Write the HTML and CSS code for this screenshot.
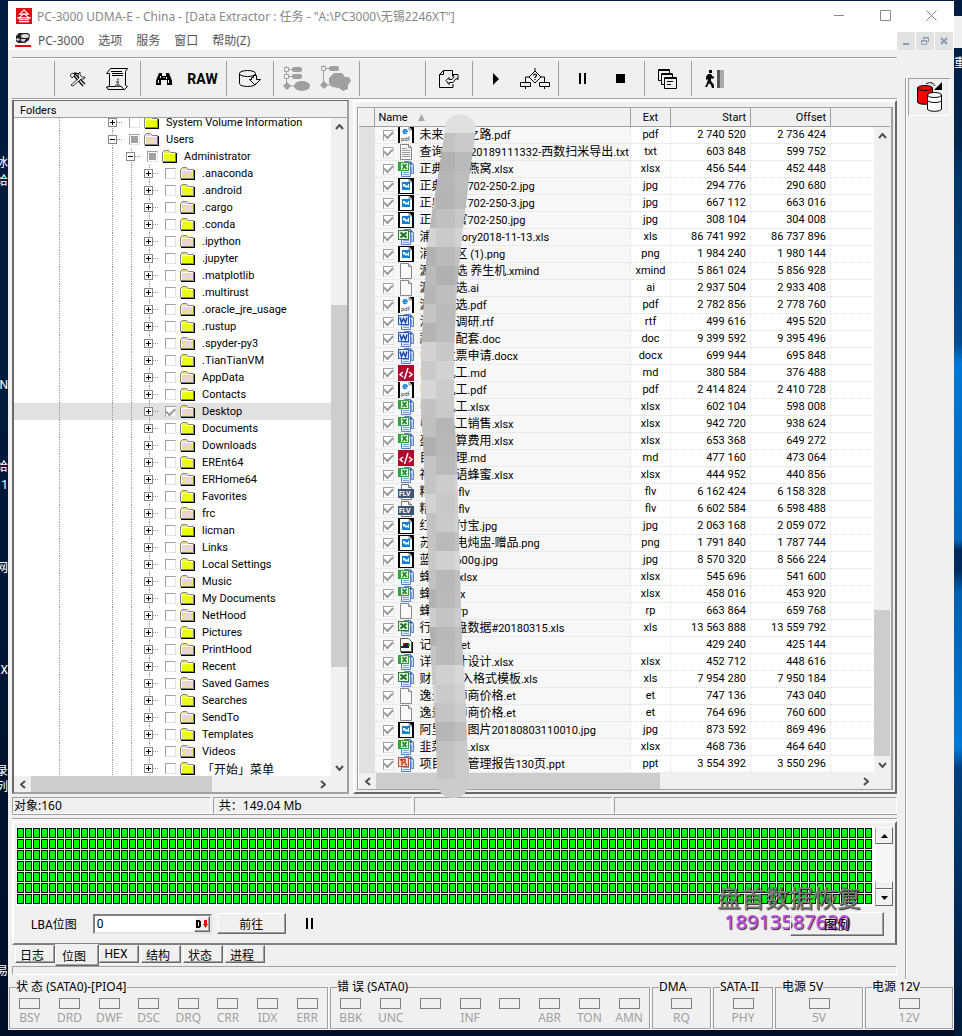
FILE: index.html
```html
<!DOCTYPE html>
<html lang="zh-CN">
<head>
    <meta charset="UTF-8">
    <meta name="viewport" content="width=device-width, initial-scale=1.0">
    <title>PC-3000 UDMA-E</title>
    <link rel="stylesheet" href="styles.css">
</head>
<body>
    <!-- icon library -->
    <svg class="defs" aria-hidden="true">
        <defs>
            <pattern id="dither" width="2" height="2" patternUnits="userSpaceOnUse">
                <rect width="2" height="2" fill="#ffff00"/>
                <rect x="1" width="1" height="1" fill="#d8d8d0"/><rect y="1" width="1" height="1" fill="#d8d8d0"/>
            </pattern>
            <pattern id="sectors" width="8" height="11" patternUnits="userSpaceOnUse">
                <rect x="1" y="1" width="7" height="10" fill="#000"/>
                <rect x="2" y="2" width="5" height="8" fill="#00ff00"/>
            </pattern>
            <symbol id="folder" viewBox="0 0 15 13">
                <path d="M1 12.5h14M14.5 3v10" stroke="#000"/>
                <path d="M.5 11.5v-9l2-2h4l2 2h5v9z" fill="url(#dither)" stroke="#808080"/>
                <path d="M1.5 11V3.5H13" stroke="#fff" fill="none"/>
            </symbol>
            <symbol id="f-pdf" viewBox="0 0 16 16">
                <rect width="16" height="16" fill="#000"/><path d="M2 0h9l3 3v13H2z" fill="#fff"/><path d="M11 0v3h3" fill="#ddd" stroke="#888"/>
                <path d="M5.500 4.500h3.700A2 2 0 1 0 8.600 6" fill="none" stroke="#1683d8" stroke-width="1.4"/>
                <text x="3" y="14" font-family="Roboto" font-size="6" fill="#333">pdf</text>
            </symbol>
            <symbol id="f-txt" viewBox="0 0 16 16">
                <path d="M2.5.5h8l3 3v12h-11z" fill="#fafafa" stroke="#888"/><path d="M10.5.5v3h3" fill="none" stroke="#888"/>
                <path d="M4 4.5h5M4 6.5h8M4 8.5h8M4 10.5h8M4 12.5h8" stroke="#999"/>
            </symbol>
            <symbol id="f-blank" viewBox="0 0 16 16">
                <path d="M2.5.5h8l3 3v12h-11z" fill="#fafafa" stroke="#888"/><path d="M10.5.5v3h3" fill="#ddd" stroke="#888"/>
            </symbol>
            <symbol id="f-jpg" viewBox="0 0 16 16">
                <rect width="16" height="16" fill="#000"/><path d="M2 1h9l3 3v11H2z" fill="#fff"/><path d="M11 1v3h3" fill="#ccc" stroke="#888"/>
                <rect x="4" y="4" width="8" height="8" fill="#0f7fd8"/><path d="M5 6h2l1 2 1-1 1 1V6h1v4l-2-1-1 1-2-2-1 1z" fill="#fff"/>
            </symbol>
            <symbol id="sheets" viewBox="0 0 16 16">
                <path d="M6.500.5h6l3 3v9h-9z" fill="#cfdcf4" stroke="#5b7fc4"/><path d="M3.500 2.500h9v13h-9z" fill="#e4ecfa" stroke="#5b7fc4"/>
                <path d="M5 11.500h6M5 13.500h6M13.500 6v7" stroke="#7fa0dc"/><path d="M12 .5l3 3h-3z" fill="#345ca8"/>
            </symbol>
            <symbol id="f-xlsx" viewBox="0 0 16 16">
                <use href="#sheets"/><rect x="0" y="1" width="11" height="9" fill="#2fa23b"/><rect x="3" y="2" width="7" height="7" fill="#dff3dd"/>
                <path d="M4.500 3l4 5M8.500 3l-4 5" stroke="#1f7d2b" stroke-width="1.500"/>
            </symbol>
            <symbol id="f-xls" viewBox="0 0 16 16">
                <use href="#sheets"/><rect x=".5" y="1.500" width="10" height="9" fill="#e3f2e0" stroke="#2c7f34"/>
                <path d="M2.500 3.500l6 5M8.500 3.500l-6 5" stroke="#1f6d2b" stroke-width="2"/>
            </symbol>
            <symbol id="f-doc" viewBox="0 0 16 16">
                <use href="#sheets"/><rect x=".5" y="1.500" width="10" height="9" fill="#dfe9fb" stroke="#2a56b4"/>
                <path d="M2 3.500l1.500 5 2-4 2 4 1.500-5" stroke="#1d48ac" stroke-width="1.500" fill="none"/>
            </symbol>
            <symbol id="f-ppt" viewBox="0 0 16 16">
                <use href="#sheets"/><rect x=".5" y="1.500" width="10" height="9" fill="#f6d9cc" stroke="#b5502c"/>
                <path d="M4 9.500V3.500h3v3H4M2 4l2-1M7 8l2 1" stroke="#c4421c" stroke-width="1.500" fill="none"/>
            </symbol>
            <symbol id="f-md" viewBox="0 0 16 16">
                <rect width="16" height="16" fill="#b00a2c"/><path d="M5 7l-3 2.500L5 12M11 7l3 2.500L11 12M10 3L6.500 14" fill="none" stroke="#fff" stroke-width="1.500"/>
            </symbol>
            <symbol id="f-flv" viewBox="0 0 16 16">
                <path d="M3.500 15.500V.5h7l3 3v12z" fill="#fff" stroke="#777"/><path d="M10.500.5v3h3" fill="#ddd" stroke="#777"/>
                <rect y="5" width="16" height="9" fill="#3d5578"/>
                <text x="1" y="12" font-family="Roboto" font-weight="700" font-size="7" fill="#fff">FLV</text>
            </symbol>
            <symbol id="f-reg" viewBox="0 0 16 16">
                <path d="M2.500 1.500h8l3 3v10h-11z" fill="#fff" stroke="#555"/><path d="M14.500 5v10.500H3" fill="none" stroke="#000"/>
                <rect x="5" y="6" width="6" height="5" fill="#222"/><rect x="3" y="9" width="3" height="2" fill="#222"/><rect x="5" y="6" width="2" height="2" fill="#d00"/><rect x="7" y="9" width="2" height="2" fill="#00c"/><rect x="10" y="7" width="2" height="2" fill="#0a0"/>
            </symbol>
        </defs>
    </svg>

    <div class="desktop-labels" aria-hidden="true">
        <span style="top:156px">冰</span><span style="top:174px">给</span><span style="top:378px">N</span>
        <span style="top:460px">给</span><span style="top:478px">1</span><span style="top:561px">网</span>
        <span style="top:663px">X</span><span style="top:764px">录</span><span style="top:780px">列</span><span style="top:964px">易</span>
    </div>
    <div class="desktop-side" aria-hidden="true"><i></i><span>重</span></div>

    <div class="window">
        <header class="titlebar">
            <svg class="app-icon" viewBox="0 0 17 17"><rect width="17" height="17" fill="#e30613"/><path d="M8.500 2L4 6.500h9zM1 10.500h2L8.500 6l5.500 4.500h2M4 10.500h9v2H4zM3 14.500h11" fill="none" stroke="#fff" stroke-width="1.200"/></svg>
            <span class="title">PC-3000 UDMA-E - China - [Data Extractor : 任务 - "A:\PC3000\无锡2246XT"]</span>
            <div class="win-buttons">
                <button type="button" aria-label="Minimize"><svg viewBox="0 0 11 11"><path d="M0 5.500h10" stroke="#888"/></svg></button>
                <button type="button" aria-label="Maximize"><svg viewBox="0 0 11 11"><path d="M.5.5h10v10H.5z" fill="none" stroke="#888"/></svg></button>
                <button type="button" aria-label="Close"><svg viewBox="0 0 11 11"><path d="M.5.5l10 10M10.500.5l-10 10" stroke="#888"/></svg></button>
            </div>
        </header>
        <nav class="menubar">
            <svg class="mdi-icon" viewBox="0 0 16 14"><path d="M1 3l3-3h9l2 2-1 5-4 3H3L1 8z" fill="#222"/><ellipse cx="10" cy="3" rx="4" ry="2" fill="#ddd"/><path d="M2 5l3 1-1 2-3-1zM6 6l5 0-2 3-3-1z" fill="#ccc"/><path d="M0 13h16" stroke="#e00" stroke-width="2"/></svg>
            <a href="#">PC-3000</a><a href="#">选项</a><a href="#">服务</a><a href="#">窗口</a><a href="#">帮助(Z)</a>
            <div class="mdi-buttons">
                <button type="button" aria-label="Minimize child"><svg viewBox="0 0 8 8"><path d="M1 7h6" stroke="#8c9db2" stroke-width="2"/></svg></button>
                <button type="button" aria-label="Restore child"><svg viewBox="0 0 8 8"><path d="M2.500 2.500v-2h5v4h-2M0.500 3.500h5v4h-5zM0 4h6M2 1h6" fill="none" stroke="#8c9db2"/></svg></button>
                <button type="button" aria-label="Close child"><svg viewBox="0 0 8 8"><path d="M1 1l6 6M7 1L1 7" stroke="#8c9db2" stroke-width="2"/></svg></button>
            </div>
        </nav>

        <div class="work">
            <div class="main">
                <div class="toolbar">
                    <div class="tool-group blank"></div>
                    <div class="tool-group">
                        <button type="button" aria-label="Tools"><svg width="16" height="16" viewBox="0 0 16 16"><path d="M1 5l4-3 4 1M3 4l10 11M5 3l10 10" fill="none" stroke="#000" stroke-width="1.200"/><path d="M10 1v3l2 2h3l-1 2-3 0-8 7-2-1 8-7-1-4zM0 4l3-2 2 2-3 3z" fill="#fff" stroke="#000" stroke-width=".8"/></svg></button>
                        <button type="button" aria-label="Passport"><svg width="22" height="22" viewBox="0 0 22 22"><path d="M4.500.5h17l-2 3v14l2 1-3 3H2l-1.500-2.500h2l1-2V5.500H.5zM17.500 21l-2-2.500h-13" fill="none" stroke="#000"/><path d="M5 3.500h11M6 5.500h11M6 7.500h11" stroke="#000"/><path d="M11 11.500h2M10 14h2v3M9 17.500h5" stroke="#777" stroke-width="2" fill="none"/></svg></button>
                    </div>
                    <div class="tool-group">
                        <button type="button" aria-label="Search"><svg width="16" height="14" viewBox="0 0 16 14"><path d="M3 1h3v3h4V1h3l2 5 1 3v4h-5V8H5v5H0V9l1-3z" fill="#000"/><path d="M2.500 8v3M4.500 4v2M12.500 8v3M10.500 5v2M8 5v1" stroke="#fff"/></svg></button>
                        <button type="button" class="raw">RAW</button>
                    </div>
                    <div class="tool-group">
                        <button type="button" aria-label="Database"><svg width="22" height="17" viewBox="0 0 22 17"><path d="M.5 3.500v10c0 4 16 4 16 0M.5 3.500c0-4 16-4 16 0s-16 4-16 0zM16.500 3.500v2M12.500 7.500h2v-2h3v4h4l-5.500 5.500L10.500 9.500h2z" fill="#f0f0f0" stroke="#000"/></svg></button>
                    </div>
                    <div class="tool-group">
                        <button type="button" disabled aria-label="Build tree"><svg width="28" height="26" viewBox="0 0 28 26"><path d="M3.500 0v18M3 3.500h8M3 10.500h8M4 20h8" stroke="#a0a0a0" fill="none"/><path d="M1.500 1.500h4v4h-4zM1.500 8.500h4v4h-4z" fill="#f0f0f0" stroke="#a0a0a0"/><rect x="9" y="1" width="10" height="5" rx="2" fill="#a0a0a0"/><rect x="9" y="8" width="10" height="5" rx="2" fill="#a0a0a0"/><path d="M4 16l4 4-4 4-4-4z" fill="#a0a0a0"/><ellipse cx="19" cy="20" rx="8" ry="5" fill="#a0a0a0"/></svg></button>
                        <button type="button" disabled aria-label="Build map"><svg width="32" height="27" viewBox="0 0 32 27"><path d="M3.500 0v18M3 3.500h8M4 20h8" stroke="#a0a0a0" fill="none"/><path d="M1.500 1.500h4v4h-4z" fill="#f0f0f0" stroke="#a0a0a0"/><rect x="9" y="1" width="10" height="5" rx="2" fill="#a0a0a0"/><path d="M4 16l4 4-4 4-4-4zM9 13l5-5h8l3 4h4l2 4-3 4v4l-5 2-4-3-7-1-3-4z" fill="#a0a0a0"/></svg></button>
                    </div>
                    <div class="tool-group wide"></div>
                    <div class="tool-group">
                        <button type="button" aria-label="Next task"><svg width="20" height="18" viewBox="0 0 20 18"><path d="M14 17.500H.5v-13l4-4h9v6M.5 4.500h4v-4M14 14v3.500" fill="none" stroke="#000"/><path d="M7 10.500l3-3v2h3l2-3-1-2h5v5l-2-1-3 4h-4v2z" fill="#f0f0f0" stroke="#000"/></svg></button>
                    </div>
                    <div class="tool-group">
                        <button type="button" aria-label="Start"><svg width="8" height="12" viewBox="0 0 8 12"><path d="M1 0l6 6-6 6z"/></svg></button>
                        <button type="button" aria-label="Conditional start"><svg width="30" height="21" viewBox="0 0 30 21"><path d="M15 0v3l6 6-6 6-6-6 6-6M9 9H5.500v5M21 9h3.500v5M.5 14.500h10v4H.5zM19.500 14.500h10v4h-10zM5.500 18v3M24.500 18v3" fill="none" stroke="#000"/><path d="M13.500 7.500c0-2 3-2 3 0 0 1-1.500 1-1.500 2.500M15 11v1" fill="none" stroke="#000" stroke-width="1.200"/></svg></button>
                    </div>
                    <div class="tool-group">
                        <button type="button" aria-label="Pause"><svg width="8" height="11" viewBox="0 0 8 11"><path d="M1 0h2v11H1zM6 0h2v11H6z"/></svg></button>
                        <button type="button" aria-label="Stop"><svg width="9" height="9" viewBox="0 0 9 9"><rect width="9" height="9"/></svg></button>
                    </div>
                    <div class="tool-group">
                        <button type="button" aria-label="Windows"><svg width="19" height="20" viewBox="0 0 19 20"><g fill="#f0f0f0" stroke="#000"><path d="M.5.5h11v11H.5z"/><path d="M1 1.500h10"/><path d="M3.500 4.500h11v11h-11z"/><path d="M4 5.500h10"/><path d="M6.500 8.500h12v11h-12z"/><path d="M7 9.500h11M9 12.500h6M9 15.500h4"/></g></svg></button>
                    </div>
                    <div class="tool-group last">
                        <button type="button" aria-label="Exit"><svg width="20" height="18" viewBox="0 0 20 18"><path d="M4 0h3v3H4zM3 4h3l2 3 1-1v2L7 9 6 8v3l3 4v3H7l-1-3-2-2-2 4H0l2-4 1-4-2 1V7z"/><rect x="12" width="3" height="18" fill="#555"/><rect x="15" width="4" height="18" fill="#aaa"/></svg></button>
                    </div>
                </div>

                <div class="panes">
                    <section class="tree-pane">
                        <h2>Folders</h2>
                        <div class="tree-view">
                            <div class="tree" id="tree"></div>
                            <div class="vscroll tree-v"><button type="button" aria-label="Up"><svg viewBox="0 0 9 6"><path d="M1 5l3.500-4L8 5"/></svg></button><div class="track"><i></i></div><button type="button" aria-label="Down"><svg viewBox="0 0 9 6"><path d="M1 1l3.500 4L8 1"/></svg></button></div>
                        </div>
                        <div class="hscroll"><button type="button" aria-label="Left"><svg viewBox="0 0 6 9"><path d="M5 1L1 4.500 5 8"/></svg></button><div class="track tree-h"><i></i></div><button type="button" aria-label="Right"><svg viewBox="0 0 6 9"><path d="M1 1l4 3.500L1 8"/></svg></button></div>
                    </section>

                    <section class="list-pane">
                        <div class="list-inner">
                            <div class="list-view">
                                <table>
                                    <colgroup><col class="c-gutter"><col><col class="c-ext"><col class="c-num"><col class="c-num"><col class="c-rest"></colgroup>
                                    <thead><tr><th></th><th class="name">Name <svg width="7" height="7" viewBox="0 0 7 7"><path d="M3.500 0L7 7H0z" fill="#a8a8a8"/></svg></th><th>Ext</th><th class="num">Start</th><th class="num">Offset</th><th></th></tr></thead>
                                    <tbody id="files"></tbody>
                                </table>
                                <div class="list-side">
                                    <div class="head-stub"></div>
                                    <div class="vscroll list-v"><button type="button" aria-label="Up"><svg viewBox="0 0 9 6"><path d="M1 5l3.500-4L8 5"/></svg></button><div class="track"><i></i></div><button type="button" aria-label="Down"><svg viewBox="0 0 9 6"><path d="M1 1l3.500 4L8 1"/></svg></button></div>
                                </div>
                            </div>
                            <div class="hscroll"><button type="button" aria-label="Left"><svg viewBox="0 0 6 9"><path d="M5 1L1 4.500 5 8"/></svg></button><div class="track list-h"><i></i></div><button type="button" aria-label="Right"><svg viewBox="0 0 6 9"><path d="M1 1l4 3.500L1 8"/></svg></button></div>
                        </div>
                        <!-- redacted part of the file names -->
                        <svg class="mosaic" id="mosaic" width="60" height="690" viewBox="418 112 60 690" aria-hidden="true">
                            <clipPath id="stroke"><path d="M446 128C448 110 474 110 477 128L471 172 466 212 462 247 458 288 455 350V417L458 450 459 500 461 570 462 610 463 640 465 670 467 705 468 740 470 765V782Q468 798 455 798 439 798 438 782L437 740 434 690 432 660 430 610 429 550 426 500 424 440 422 417V350L425 300 428 247 434 205 440 170z"/></clipPath>
                            <g clip-path="url(#stroke)" id="tiles"></g>
                        </svg>
                    </section>
                </div>

                <div class="status">
                    <div>对象:160</div><div class="total">共：149.04 Mb</div><div></div><div class="grow"></div>
                </div>

                <section class="map-pane">
                    <div class="map-view">
                        <svg class="map" aria-label="位图"><rect width="100%" height="100%" fill="url(#sectors)"/></svg>
                        <div class="classic-scroll">
                            <button type="button" aria-label="Up"><svg viewBox="0 0 7 4"><path d="M3.500 0L7 4H0z"/></svg></button>
                            <div class="track"></div><div class="thumb"></div>
                            <button type="button" aria-label="Down"><svg viewBox="0 0 7 4"><path d="M3.500 4L7 0H0z"/></svg></button>
                        </div>
                    </div>
                    <div class="map-controls">
                        <label for="lba">LBA位图</label>
                        <div class="lba-field">
                            <input type="text" id="lba" value="0">
                            <button type="button" aria-label="Decimal"><svg width="12" height="8" viewBox="0 0 12 8"><path d="M1 1h2l1 1v4L3 7H1z" fill="none" stroke="#000" stroke-width="2"/><path d="M8 0h3v4h1L9.500 8 7 4h1z" fill="#f00"/></svg></button>
                        </div>
                        <button type="button" class="push go">前往</button>
                        <button type="button" class="flat" aria-label="Pause"><svg width="8" height="11" viewBox="0 0 8 11"><path d="M1 0h2v11H1zM6 0h2v11H6z"/></svg></button>
                        <button type="button" class="push legend-btn">图例</button>
                        <div class="watermark"><p class="brand">盘首数据恢复</p><p class="phone">18913587620</p></div>
                    </div>
                </section>

                <div class="tabs" role="tablist">
                    <button type="button" role="tab">日志</button><button type="button" role="tab" class="active" aria-selected="true">位图</button><button type="button" role="tab">HEX</button><button type="button" role="tab">结构</button><button type="button" role="tab">状态</button><button type="button" role="tab">进程</button>
                </div>
                <div class="strip"></div>
            </div>

            <aside class="dock">
                <button type="button" aria-label="Switch drive"><svg width="26" height="30" viewBox="0 0 26 30"><path d="M.5 6v14c0 3 14 3 15 0V6" fill="#f00" stroke="#000"/><ellipse cx="8" cy="6" rx="7.500" ry="2.500" fill="#f00" stroke="#000"/><path d="M10.500 13v14c0 3 14 3 14 0V13" fill="#fff" stroke="#000"/><ellipse cx="17.500" cy="13" rx="7" ry="2.500" fill="#fff" stroke="#000"/><path d="M11 19c2 2 12 2 13 0" fill="none" stroke="#000"/><path d="M9 2c3-2 7-2 9 2" fill="none" stroke="#000"/><path d="M25 0v8h-8z"/></svg></button>
            </aside>
        </div>

        <footer class="leds" id="leds"></footer>
    </div>

    <script src="script.js"></script>
</body>
</html>
```
FILE: styles.css
```css
* {
    box-sizing: border-box;
}
body {
    margin: 0;
    padding: 1px 8px 8px;
    position: relative;
    overflow-x: hidden;
    background: linear-gradient(#001c40, #001a3c 40%, #000f28);
    font-family: Roboto, "Noto Sans CJK SC", sans-serif;
    font-size: 11px;
    color: #000;
}
button {
    font: inherit;
    color: inherit;
    border: none;
    background: none;
    padding: 0;
    margin: 0;
    display: flex;
    align-items: center;
    justify-content: center;
}
.defs {
    position: absolute;
    width: 0;
    height: 0;
}
.cjk {
    font-size: 12px;
}

/* desktop behind the window */
.desktop-labels span {
    position: absolute;
    left: 0;
    width: 8px;
    overflow: hidden;
    color: #fff;
    font-size: 12px;
    line-height: 14px;
    display: flex;
    justify-content: flex-end;
}
.desktop-side {
    position: absolute;
    top: 0;
    right: 0;
    bottom: 0;
    width: 8px;
    overflow: hidden;
    color: #fff;
    background: linear-gradient(#001c40 0, #002850 14%, #003466 16%, #004a90 33%, #0078d7 35%, #0066bb 52%, #00285a 53%, #002c60 55%, #0060b0 57%, #0078d7 72%, #004080 74%, #001a38 100%);
}
.desktop-side i {
    display: block;
    margin-top: 16px;
    height: 32px;
    background: #f0f0f0;
}
.desktop-side span {
    display: block;
    font-size: 12px;
    line-height: 30px;
}

.window {
    position: relative;
    background: #f0f0f0;
}
.titlebar, .menubar {
    display: flex;
    align-items: center;
    background: #fff;
    font-family: "Noto Sans", "Noto Sans CJK SC", sans-serif;
    font-size: 12px;
}
.titlebar {
    height: 29px;
    padding-left: 8px;
    color: #888;
}
.app-icon {
    width: 16px;
    height: 16px;
    margin-right: 5px;
}
.win-buttons {
    display: flex;
    margin-left: auto;
}
.win-buttons button {
    width: 46px;
    height: 29px;
}
.win-buttons svg {
    width: 11px;
    height: 11px;
}
.menubar {
    height: 20px;
    padding: 0 1px 0 7px;
    color: #555;
}
.mdi-icon {
    width: 16px;
    height: 14px;
    margin-right: 7px;
}
.menubar a {
    color: inherit;
    text-decoration: none;
    margin-right: 14px;
}
.mdi-buttons {
    display: flex;
    gap: 1px;
    margin-left: auto;
    align-self: flex-end;
}
.mdi-buttons button {
    width: 18px;
    height: 18px;
    background: #e2e2e2;
}
.mdi-buttons svg {
    width: 8px;
    height: 8px;
}

.work {
    display: flex;
    gap: 8px;
}
.main {
    flex: 1;
    min-width: 0;
    padding: 7px 0 0 4px;
}
.dock {
    width: 49px;
    margin-top: 28px;
    padding-left: 2px;
    border-left: 1px solid #a0a0a0;
    box-shadow: inset 1px 0 #fff;
}
.dock button {
    width: 43px;
    height: 38px;
    border: 1px solid;
    border-color: #a0a0a0 #fff #fff #a0a0a0;
}

/* toolbar */
.toolbar {
    display: flex;
    align-items: center;
    height: 43px;
    border-top: 1px solid #a0a0a0;
    border-bottom: 1px solid #fff;
    box-shadow: inset 0 1px #fff, inset 0 -1px #a0a0a0;
}
.tool-group {
    display: flex;
    height: 35px;
    padding: 0 4px 0 3px;
    border-right: 1px solid #a0a0a0;
}
.tool-group.last {
    border: none;
}
.tool-group.blank {
    width: 43px;
}
.tool-group.wide {
    width: 66px;
}
.tool-group button {
    width: 39px;
    height: 35px;
}
.tool-group svg {
    flex: none;
}
.tool-group .raw {
    font-size: 14px;
    font-weight: 700;
}

/* panes */
.panes {
    display: flex;
    gap: 4px;
}
.tree-pane {
    flex: 338 1 0;
    min-width: 0;
    display: flex;
    flex-direction: column;
    border: 1px solid #696969;
    border-width: 1px 2px 2px 2px;
    border-color: #696969 #a0a0a0 #a0a0a0 #696969;
}
.tree-pane h2 {
    margin: 0;
    padding-left: 6px;
    height: 17px;
    line-height: 20px;
    font-size: 11px;
    font-weight: 400;
    border-bottom: 1px solid #a0a0a0;
}
.tree-view {
    display: flex;
    flex: 1;
    min-height: 0;
    overflow: hidden;
    background: #fff;
}
.tree {
    flex: 1;
    min-width: 0;
    margin: -4px 0 -5px;
}
.node {
    display: flex;
    align-items: center;
    height: 17px;
    white-space: nowrap;
    background-image: repeating-linear-gradient(#999 0 1px, transparent 1px 2px), repeating-linear-gradient(#999 0 1px, transparent 1px 2px), repeating-linear-gradient(#999 0 1px, transparent 1px 2px), repeating-linear-gradient(#999 0 1px, transparent 1px 2px);
    background-size: 1px 100%;
    background-repeat: no-repeat;
    background-position: 45px 0, 98px 0, 117px 0, 135px 0;
}
.node.level1 {
    padding-left: 94px;
    background-position: 45px 0, 98px 0, -9px 0, -9px 0;
}
.node.level2 {
    padding-left: 112px;
    background-position: 45px 0, 98px 0, 117px 0, -9px 0;
}
.node.level3 {
    padding-left: 130px;
}
.node.selected {
    background-color: #e1e1e1;
}
.node button {
    width: 9px;
    height: 9px;
    background: #fff;
    border: 1px solid #888;
}
.node button svg {
    width: 5px;
    height: 5px;
    flex: none;
}
.dots {
    width: 6px;
    height: 1px;
    margin-right: 6px;
    background: repeating-linear-gradient(90deg, #999 0 1px, transparent 1px 2px);
}
input[type="checkbox"] {
    appearance: none;
    flex: none;
    width: 11px;
    height: 11px;
    margin: 0;
    background: #fff;
    border: 1px solid;
    border-color: #a0a0a0 #e3e3e3 #e3e3e3 #a0a0a0;
}
input[type="checkbox"]:indeterminate {
    background: linear-gradient(#a0a0a0, #a0a0a0) center / 7px 7px no-repeat #fff;
}
input[type="checkbox"]:checked {
    display: grid;
    place-items: center;
}
input[type="checkbox"]:checked::after {
    content: "";
    width: 7px;
    height: 4px;
    margin-bottom: 2px;
    border: solid #999;
    border-width: 0 0 2px 2px;
    transform: rotate(-45deg);
}
.node label {
    display: flex;
    align-items: center;
}
.node label svg {
    width: 15px;
    height: 13px;
    margin: 0 7px 0 4px;
}

/* scrollbars */
.vscroll {
    display: flex;
    flex-direction: column;
    width: 16px;
    flex: none;
}
.vscroll, .hscroll {
    background: #f0f0f0;
}
.vscroll button {
    height: 17px;
}
.hscroll {
    display: flex;
    height: 16px;
}
.hscroll button {
    width: 17px;
}
.vscroll svg, .hscroll svg {
    fill: none;
    stroke: #505050;
    stroke-width: 2;
}
.vscroll svg {
    width: 9px;
    height: 6px;
}
.hscroll svg {
    width: 6px;
    height: 9px;
}
.vscroll .track, .hscroll .track {
    flex: 1;
    display: flex;
}
.vscroll .track {
    flex-direction: column;
}
.track i {
    background: #cdcdcd;
}
.tree-v .track {
    padding: 170px 0 92px;
}
.list-v .track {
    padding: 466px 0 0;
}
.tree-v i, .list-v i {
    flex: 1;
}
.tree-h i {
    width: 64%;
}
.list-h i {
    width: 59%;
}
.hscroll button:last-child {
    margin-right: 16px;
}

/* file list */
.list-pane {
    position: relative;
    flex: 543 1 0;
    min-width: 0;
    padding: 5px 2px 2px;
    border: 2px solid;
    border-color: #fff #696969 #696969 #fff;
}
.list-inner {
    border: 1px solid #a0a0a0;
    border-width: 1px 2px 1px 1px;
    box-shadow: inset 1px 0 #fff;
    padding: 0 1px;
}
.list-view {
    display: flex;
    background: #fff;
}
table {
    flex: 1;
    min-width: 0;
    width: 100%;
    table-layout: fixed;
    border-collapse: separate;
    border-spacing: 0;
}
.c-gutter {
    width: 16px;
}
.c-ext {
    width: 40px;
}
.c-num {
    width: 80px;
}
.c-rest {
    width: 43px;
}
.list-side {
    display: flex;
    flex-direction: column;
}
.list-side .vscroll {
    flex: 1;
}
.head-stub {
    height: 19px;
}
th, .head-stub {
    background: #f0f0f0;
    border-bottom: 1px solid #a0a0a0;
}
th {
    height: 19px;
    padding: 0;
    line-height: 16px;
    vertical-align: bottom;
    font-weight: 400;
    border-right: 1px solid #a0a0a0;
}
th:last-child {
    border-right: none;
}
th.name {
    text-align: left;
    padding-left: 3px;
}
th.name svg {
    margin-left: 8px;
}
td {
    height: 17px;
    padding: 0;
    line-height: 16px;
    text-align: center;
    overflow: hidden;
    white-space: nowrap;
    border-bottom: 1px dotted #ddd;
    border-right: 1px dotted #e4e4e4;
}
td:first-child {
    background: #e1e1e1;
}
td:nth-child(2) {
    background: #f7f7f7;
}
td:last-child {
    border-right: none;
}
.num {
    text-align: right;
    padding-right: 4px;
}
.file {
    display: flex;
    align-items: center;
    height: 16px;
    padding-left: 8px;
}
.file label {
    display: flex;
    align-items: center;
    white-space: pre;
}
.file svg {
    width: 16px;
    height: 16px;
    margin: 0 5px 0 4px;
}
.mosaic {
    position: absolute;
    left: 62px;
    top: 10px;
}

/* status line */
.status {
    display: flex;
    gap: 2px;
    margin-top: 3px;
    padding-bottom: 4px;
    font-family: "Noto Sans", "Noto Sans CJK SC", sans-serif;
    font-size: 12px;
    border-bottom: 1px solid #a0a0a0;
    box-shadow: inset 0 -3px #f0f0f0, inset 0 -4px #a0a0a0, 0 1px #fff;
}
.status div {
    flex: 1 1 199px;
    min-width: 0;
    height: 17px;
    line-height: 15px;
    padding-left: 1px;
    border: 1px solid;
    border-color: #a0a0a0 #fff #fff #a0a0a0;
}
.status .total {
    padding-left: 5px;
}
.status .grow {
    flex-basis: 283px;
}

/* bitmap */
.map-pane {
    margin-top: 2px;
    padding: 4px 2px 2px;
    border: 2px solid;
    border-color: #fff #696969 #696969 #fff;
    border-bottom-color: #808080;
}
.map-view {
    display: flex;
    background: #fff;
}
.map {
    flex: 1;
    min-width: 0;
    height: 78px;
    margin: 0 2px 1px 0;
}
.classic-scroll {
    display: flex;
    flex-direction: column;
    width: 18px;
    background: #f0f0f0;
}
.classic-scroll button, .thumb {
    height: 17px;
    border: 1px solid;
    border-color: #fff #696969 #696969 #a0a0a0;
}
.thumb {
    height: 8px;
}
.classic-scroll .track {
    flex: 1;
    background: #f6f6f6;
}
.classic-scroll svg {
    width: 7px;
    height: 4px;
}
.map-controls {
    position: relative;
    display: flex;
    align-items: center;
    height: 35px;
    padding: 0 9px 0 15px;
    font-size: 12px;
}
.lba-field {
    display: flex;
    width: 119px;
    height: 20px;
    margin-left: 16px;
    background: #fff;
    border: 2px solid;
    border-color: #808080 #e3e3e3 #e3e3e3 #808080;
}
.lba-field input {
    flex: 1;
    min-width: 0;
    padding: 0 2px;
    border: none;
    font: inherit;
    background: transparent;
}
.lba-field button, .push {
    background: #f0f0f0;
    border: 1px solid;
    border-color: #fff #696969 #696969 #fff;
    box-shadow: inset -1px -1px #a0a0a0;
}
.lba-field button {
    width: 16px;
}
.go {
    width: 69px;
    height: 21px;
    margin-left: 5px;
}
.flat {
    margin-left: 19px;
}
.legend-btn {
    position: relative;
    z-index: 2;
    width: 94px;
    height: 24px;
    margin-left: auto;
    background: transparent;
    font-size: 13px;
}
.watermark {
    position: absolute;
    z-index: 1;
    right: 32px;
    bottom: 6px;
    text-align: center;
}
.watermark p {
    margin: 0;
}
.brand {
    font-family: "Noto Sans CJK SC", sans-serif;
    font-size: 24px;
    line-height: 24px;
    color: #808080;
    text-shadow: 1px 1px 1px #222;
}
.watermark .phone {
    margin-right: 4px;
    font-family: "Noto Sans", sans-serif;
    font-size: 20px;
    line-height: 26px;
    color: #c84cf4;
    text-shadow: 1px 1px 1px #222;
}

/* tabs */
.tabs {
    display: flex;
    height: 21px;
    padding-left: 3px;
    font-size: 12px;
}
.tabs button {
    width: 40px;
    height: 18px;
    margin-right: 2px;
    padding-right: 6px;
    border: 1px solid;
    border-color: transparent #696969 #696969 #fff;
    box-shadow: inset -1px -1px #a0a0a0;
}
.tabs .active {
    width: 44px;
    height: 22px;
    margin: -1px 0 0 -2px;
    background: #f0f0f0;
}
.strip {
    height: 9px;
    margin-bottom: 4px;
    border: 1px solid;
    border-color: #a0a0a0 #fff #fff #a0a0a0;
}

/* status LEDs */
.leds {
    display: flex;
    gap: 2px;
    padding: 0 1px 1px;
    font-family: "Noto Sans", "Noto Sans CJK SC", sans-serif;
    font-size: 12px;
}
.leds fieldset {
    min-width: 0;
    margin: 0;
    padding: 3px 0 1px;
    border: 1px solid #a0a0a0;
    box-shadow: 1px 1px #fff;
}
.leds legend {
    margin-left: 6px;
    padding: 0;
    line-height: 16px;
    white-space: nowrap;
}
.led-row {
    display: flex;
}
.led {
    flex: 1;
    min-width: 0;
    display: flex;
    flex-direction: column;
    align-items: center;
    color: #a0a0a0;
    line-height: 18px;
}
.led i {
    width: 21px;
    height: 11px;
    border: 1px solid #808080;
}
.led span {
    height: 18px;
}
```
FILE: script.js
```javascript
const folders = ['.anaconda', '.android', '.cargo', '.conda', '.ipython', '.jupyter', '.matplotlib', '.multirust',
    '.oracle_jre_usage', '.rustup', '.spyder-py3', '.TianTianVM', 'AppData', 'Contacts', 'Desktop', 'Documents',
    'Downloads', 'EREnt64', 'ERHome64', 'Favorites', 'frc', 'licman', 'Links', 'Local Settings', 'Music',
    'My Documents', 'NetHood', 'Pictures', 'PrintHood', 'Recent', 'Saved Games', 'Searches', 'SendTo',
    'Templates', 'Videos', '「开始」菜单'];

// icon, name, ext, start, offset
const files = [
    ['pdf', '未来　　之路.pdf', 'pdf', '2 740 520', '2 736 424'],
    ['txt', '查询　　\u00a020189111332-西数扫米导出.txt', 'txt', '603 848', '599 752'],
    ['xlsx', '正典　　燕窝.xlsx', 'xlsx', '456 544', '452 448'],
    ['jpg', '正典　官702-250-2.jpg', 'jpg', '294 776', '290 680'],
    ['jpg', '正典　官702-250-3.jpg', 'jpg', '667 112', '663 016'],
    ['jpg', '正典　官702-250.jpg', 'jpg', '308 104', '304 008'],
    ['xls', '浦　　\u00a0tory2018-11-13.xls', 'xls', '86 741 992', '86 737 896'],
    ['jpg', '消　　区 (1).png', 'png', '1 984 240', '1 980 144'],
    ['blank', '源　　选 养生机.xmind', 'xmind', '5 861 024', '5 856 928'],
    ['blank', '源　　选.ai', 'ai', '2 937 504', '2 933 408'],
    ['pdf', '源　　选.pdf', 'pdf', '2 782 856', '2 778 760'],
    ['doc', '法　　调研.rtf', 'rtf', '499 616', '495 520'],
    ['doc', '蔬　　配套.doc', 'doc', '9 399 592', '9 395 496'],
    ['doc', '电　发票申请.docx', 'docx', '699 944', '695 848'],
    ['md', '电　机工.md', 'md', '380 584', '376 488'],
    ['pdf', '电　机工.pdf', 'pdf', '2 414 824', '2 410 728'],
    ['xlsx', '电　机工.xlsx', 'xlsx', '602 104', '598 008'],
    ['xlsx', '电　机工销售.xlsx', 'xlsx', '942 720', '938 624'],
    ['xlsx', '盈　　算费用.xlsx', 'xlsx', '653 368', '649 272'],
    ['md', '目　　理.md', 'md', '477 160', '473 064'],
    ['xlsx', '神　　语蜂蜜.xlsx', 'xlsx', '444 952', '440 856'],
    ['flv', '精　　.flv', 'flv', '6 162 424', '6 158 328'],
    ['flv', '精　　.flv', 'flv', '6 602 584', '6 598 488'],
    ['jpg', '红　　付宝.jpg', 'jpg', '2 063 168', '2 059 072'],
    ['jpg', '苏　　电炖盅-赠品.png', 'png', '1 791 840', '1 787 744'],
    ['jpg', '蓝　　600g.jpg', 'jpg', '8 570 320', '8 566 224'],
    ['xlsx', '蜂　　.xlsx', 'xlsx', '545 696', '541 600'],
    ['xlsx', '蜂　.xlsx', 'xlsx', '458 016', '453 920'],
    ['blank', '蜂　　.rp', 'rp', '663 864', '659 768'],
    ['xls', '行　　盘数据#20180315.xls', 'xls', '13 563 888', '13 559 792'],
    ['reg', '记　　\u00a0.et', '', '429 240', '425 144'],
    ['xlsx', '详　　计设计.xlsx', 'xlsx', '452 712', '448 616'],
    ['xls', '财务　\u00a0\u00a0入格式模板.xls', 'xls', '7 954 280', '7 950 184'],
    ['blank', '逸景　师商价格.et', 'et', '747 136', '743 040'],
    ['blank', '逸景　师商价格.et', 'et', '764 696', '760 600'],
    ['jpg', '阿里　　图片20180803110010.jpg', 'jpg', '873 592', '869 496'],
    ['xlsx', '韭菜　　.xlsx', 'xlsx', '468 736', '464 640'],
    ['ppt', '项目　　管理报告130页.ppt', 'ppt', '3 554 392', '3 550 296']
];

// legend, width share, lamps
const groups = [
    ['状 态 (SATA0)-[PIO4]', 319, ['BSY', 'DRD', 'DWF', 'DSC', 'DRQ', 'CRR', 'IDX', 'ERR']],
    ['错 误 (SATA0)', 320, ['BBK', 'UNC', '', 'INF', '', 'ABR', 'TON', 'AMN']],
    ['DMA', 59, ['RQ']],
    ['SATA-II', 60, ['PHY']],
    ['电源 5V', 88, ['5V']],
    ['电源 12V', 88, ['12V']]
];

function mark(text) {
    return text.replace(/[\u3000-\u9fff]+/g, '<span class="cjk">$&</span>');
}

function node(name, level, open) {
    const sign = open ? 'M0 2.5h5' : 'M0 2.5h5M2.5 0v5';
    const selected = name === 'Desktop';
    return `<div class="node level${level}${selected ? ' selected' : ''}">
        <button type="button" aria-label="Expand"><svg viewBox="0 0 5 5"><path d="${sign}" stroke="#000"/></svg></button><span class="dots"></span>
        <label><input type="checkbox"${selected ? ' checked' : ''}${open ? ' class="partial"' : ''}><svg><use href="#folder"/></svg>${mark(name)}</label>
    </div>`;
}

document.getElementById('tree').innerHTML =
    node('System Volume Information', 1) + node('Users', 1, true) + node('Administrator', 2, true) +
    folders.map(name => node(name, 3)).join('');
document.querySelectorAll('.partial').forEach(box => { box.indeterminate = true; });

document.getElementById('files').innerHTML = files.map(([icon, name, ext, start, offset]) => `<tr><td></td>
    <td><div class="file"><label><input type="checkbox" checked><svg><use href="#f-${icon}"/></svg><span>${mark(name)}</span></label></div></td>
    <td>${ext}</td><td class="num">${start}</td><td class="num">${offset}</td><td></td></tr>`).join('');

document.getElementById('leds').innerHTML = groups.map(([title, share, lamps]) => `<fieldset style="flex:${share} 1 ${share}px">
    <legend>${title}</legend><div class="led-row">${lamps.map(l => `<div class="led"><i></i><span>${l}</span></div>`).join('')}</div></fieldset>`).join('');

// grey tiles, 19px squares
const shades = [224, 190, 182, 178, 184, 188, 206, 182, 180, 186, 190, 184, 204, 206, 208, 198, 186, 180, 190, 200, 204, 198, 190, 204, 188, 182, 200, 180, 190, 204, 206, 192, 186, 190, 200, 204];
let tiles = '';
shades.forEach((shade, row) => {
    for (let col = 0; col < 4; col++) {
        const v = row === 0 || row > 34 ? shade : shade + [6, -4, 4, 12][(col + row % 2) % 4];
        tiles += `<rect x="${418 + col * 19}" y="${114 + row * 19}" width="19" height="19" fill="rgb(${v},${v},${v})"/>`;
    }
});
document.getElementById('tiles').innerHTML = tiles;
```
